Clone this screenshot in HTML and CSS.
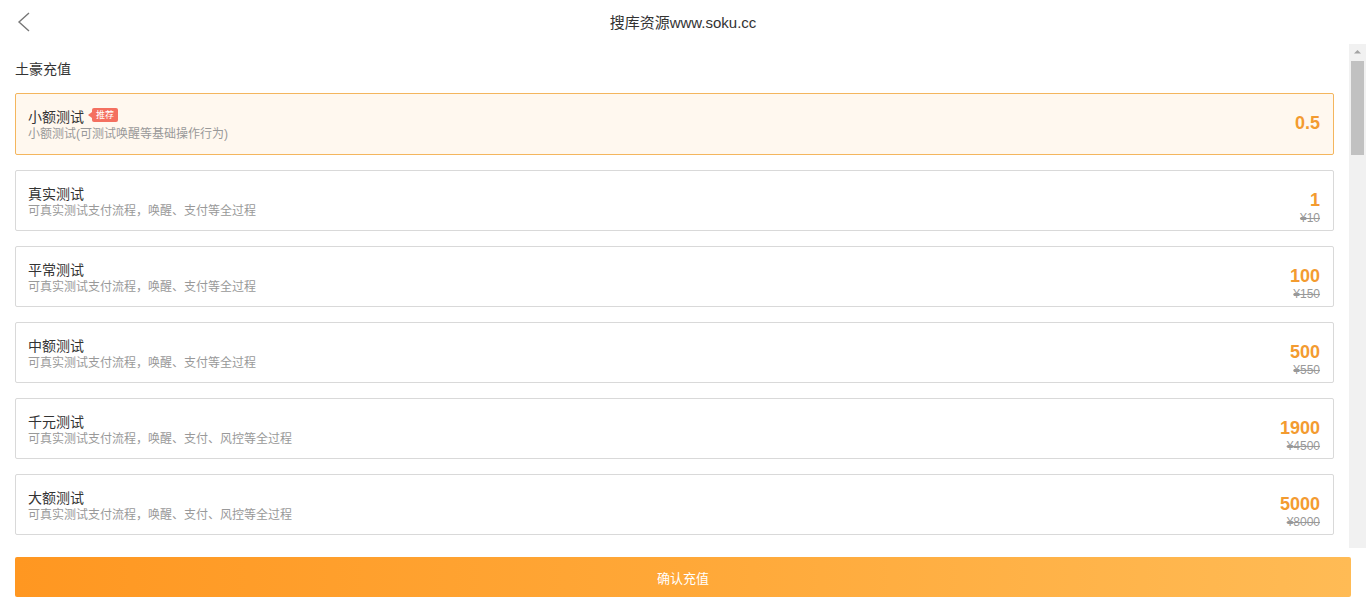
FILE: index.html
```html
<!DOCTYPE html>
<html lang="zh-CN">
<head>
<meta charset="utf-8">
<title>搜库资源www.soku.cc</title>
<link rel="stylesheet" href="styles.css">
</head>
<body>
<div class="page">
  <header class="topbar">
    <a class="back" href="#" aria-label="返回">
      <svg width="14" height="20" viewBox="0 0 14 20"><path d="M12 1 L2 10 L12 19" fill="none" stroke="#777" stroke-width="1.4" stroke-linejoin="miter"/></svg>
    </a>
    <h1 class="title">搜库资源www.soku.cc</h1>
  </header>
  <div class="viewport">
    <main class="scroller">
      <div class="content">
        <h2 class="section-title">土豪充值</h2>
        <ul class="plans">
          <li class="plan active">
            <div class="plan-info">
              <div class="plan-name">小额测试<span class="badge">推荐</span></div>
              <div class="plan-desc">小额测试(可测试唤醒等基础操作行为)</div>
            </div>
            <div class="plan-price"><div class="price">0.5</div></div>
          </li>
          <li class="plan">
            <div class="plan-info">
              <div class="plan-name">真实测试</div>
              <div class="plan-desc">可真实测试支付流程，唤醒、支付等全过程</div>
            </div>
            <div class="plan-price"><div class="price">1</div><div class="orig">¥10</div></div>
          </li>
          <li class="plan">
            <div class="plan-info">
              <div class="plan-name">平常测试</div>
              <div class="plan-desc">可真实测试支付流程，唤醒、支付等全过程</div>
            </div>
            <div class="plan-price"><div class="price">100</div><div class="orig">¥150</div></div>
          </li>
          <li class="plan">
            <div class="plan-info">
              <div class="plan-name">中额测试</div>
              <div class="plan-desc">可真实测试支付流程，唤醒、支付等全过程</div>
            </div>
            <div class="plan-price"><div class="price">500</div><div class="orig">¥550</div></div>
          </li>
          <li class="plan">
            <div class="plan-info">
              <div class="plan-name">千元测试</div>
              <div class="plan-desc">可真实测试支付流程，唤醒、支付、风控等全过程</div>
            </div>
            <div class="plan-price"><div class="price">1900</div><div class="orig">¥4500</div></div>
          </li>
          <li class="plan">
            <div class="plan-info">
              <div class="plan-name">大额测试</div>
              <div class="plan-desc">可真实测试支付流程，唤醒、支付、风控等全过程</div>
            </div>
            <div class="plan-price"><div class="price">5000</div><div class="orig">¥8000</div></div>
          </li>
        </ul>
      </div>
    </main>
    <div class="scrollbar" aria-hidden="true">
      <div class="sb-up">
        <svg width="17" height="17" viewBox="0 0 17 17"><path d="M5 9.5 L8.5 6 L12 9.5 Z" fill="#a3a3a3"/></svg>
      </div>
      <div class="sb-thumb"></div>
    </div>
  </div>
  <footer class="footer">
    <button class="confirm" type="button">确认充值</button>
  </footer>
</div>
</body>
</html>
```

FILE: styles.css
```css
* { box-sizing: border-box; }
html, body { margin: 0; padding: 0; height: 100%; }
body {
  font-family: "Liberation Sans", "Noto Sans CJK SC", sans-serif;
  color: #333;
  background: #fff;
  overflow: hidden;
}
.page {
  height: 100vh;
  display: flex;
  flex-direction: column;
}
.topbar {
  height: 44px;
  flex: none;
  display: flex;
  align-items: center;
  justify-content: center;
  position: relative;
  padding-top: 1px;
}
.back {
  position: absolute;
  left: 17px;
  top: 12px;
  display: block;
  width: 14px;
  height: 20px;
}
.back svg { display: block; }
.title {
  margin: 0;
  font-size: 15px;
  font-weight: normal;
  color: #333;
  line-height: 20px;
}
.viewport {
  flex: 1;
  min-height: 0;
  display: flex;
}
.scroller {
  flex: 1;
  min-width: 0;
  overflow: hidden;
}
.scrollbar {
  flex: none;
  width: 17px;
  background: #f1f1f1;
  display: flex;
  flex-direction: column;
  align-items: center;
}
.sb-up {
  height: 17px;
  width: 17px;
}
.sb-up svg { display: block; }
.sb-thumb {
  width: 13px;
  height: 94px;
  background: #c1c1c1;
}
.content {
  padding: 16px 15px 15px;
}
.section-title {
  margin: 0 0 15px;
  font-size: 14px;
  font-weight: normal;
  line-height: 18px;
  color: #333;
}
.plans {
  list-style: none;
  margin: 0;
  padding: 0;
  display: flex;
  flex-direction: column;
  gap: 15px;
}
.plan {
  height: 61px;
  border: 1px solid #d9d9d9;
  border-radius: 2px;
  background: #fff;
  display: flex;
  justify-content: space-between;
  padding: 0 13px 0 12px;
}
.plan.active {
  height: 62px;
  background: #fff8ef;
  border-color: #f4b65e;
}
.plan-info {
  display: flex;
  flex-direction: column;
  padding-top: 15px;
}
.plan-name {
  font-size: 14px;
  line-height: 17px;
  color: #333;
  display: flex;
  align-items: center;
}
.badge {
  position: relative;
  margin-left: 8px;
  margin-top: -6px;
  background: #f47060;
  color: #fff;
  font-size: 9px;
  line-height: 14px;
  height: 14px;
  padding: 0 4px;
  border-radius: 2px;
}
.badge::before {
  content: "";
  position: absolute;
  left: -4px;
  top: 4px;
  border-top: 3px solid transparent;
  border-bottom: 3px solid transparent;
  border-right: 4px solid #f47060;
}
.plan-desc {
  font-size: 12px;
  line-height: 17px;
  color: #999;
}
.plan-price {
  padding-top: 18px;
  text-align: right;
}
.price {
  font-size: 18px;
  font-weight: bold;
  line-height: 22px;
  color: #f39b30;
}
.orig {
  font-size: 12px;
  line-height: 14px;
  color: #999;
  text-decoration: line-through;
}
.footer {
  flex: none;
  height: 57px;
  padding: 9px 15px 8px;
  background: #fff;
}
.confirm {
  display: block;
  width: 100%;
  height: 40px;
  border: 0;
  border-radius: 2px;
  background: linear-gradient(90deg, #ff9721 0%, #ffa838 50%, #ffbb55 100%);
  color: #fff;
  font-family: "Liberation Sans", "Noto Sans CJK SC", sans-serif;
  font-size: 13px;
  cursor: pointer;
}
```
